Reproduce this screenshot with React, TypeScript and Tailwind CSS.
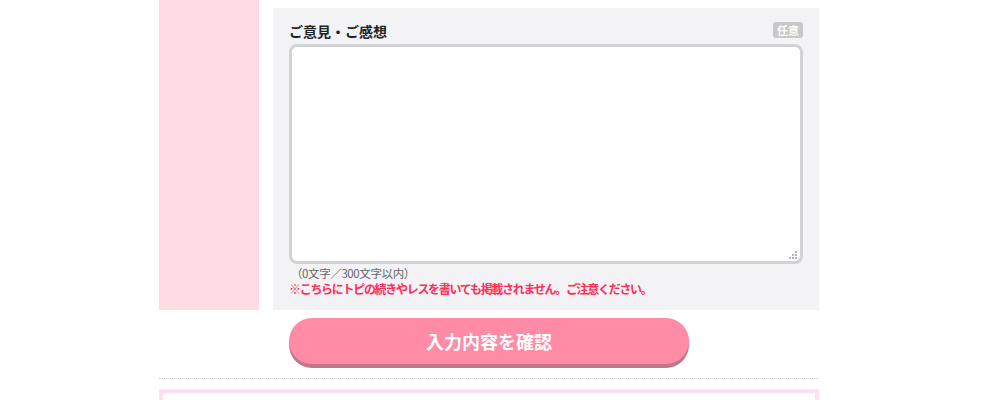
export default function App() {
  return (
    <div
      className="min-h-[400px] bg-white"
      style={{ fontFamily: '"Noto Sans CJK JP", "Noto Sans", sans-serif' }}
    >
      <div className="ml-[159px] w-[660px]">
        {/* form row */}
        <div className="flex gap-[14px]">
          <div className="w-[100px] shrink-0 bg-[#ffdbe3]" />
          <div className="mt-[8px] flex-1 bg-[#f3f3f5] px-[16px] pb-[13px] pt-[16px]">
            <div className="flex h-[20px] items-start justify-between">
              <span className="text-[14px] font-bold leading-[14px] text-[#222]">ご意見・ご感想</span>
              <span className="-mt-[2px] rounded-[3px] bg-[#c8c8c8] px-[4px] py-[2px] text-[11px] font-bold leading-[12px] text-white">
                任意
              </span>
            </div>
            <div className="relative">
              <textarea className="block h-[220px] w-full resize-none rounded-[8px] border-[3px] border-[#d2d2d4] bg-white p-2 text-[13px] outline-none" />
              {/* resize grip */}
              <svg className="absolute bottom-[5px] right-[6px]" width="8" height="8" viewBox="0 0 8 8" fill="#b5b5b5">
                <rect x="6" y="0" width="2" height="2" />
                <rect x="3" y="3" width="2" height="2" />
                <rect x="6" y="3" width="2" height="2" />
                <rect x="0" y="6" width="2" height="2" />
                <rect x="3" y="6" width="2" height="2" />
                <rect x="6" y="6" width="2" height="2" />
              </svg>
            </div>
            <p className="mt-[1px] pl-[2px] text-[11.5px] leading-[16px] tracking-[-0.4px] text-[#666]">（0文字／300文字以内）</p>
            <p className="text-[12px] font-bold leading-[16px] tracking-[-1.3px] text-[#ff2d5a]">
              ※こちらにトピの続きやレスを書いても掲載されません。ご注意ください。
            </p>
          </div>
        </div>

        {/* confirm button */}
        <div className="ml-[130px] pt-[8px]">
          <button className="block h-[46px] w-[400px] rounded-full bg-[#ff8ba6] text-[18px] font-bold text-white shadow-[0_4px_0_#c27788]">
            入力内容を確認
          </button>
        </div>

        <div className="mt-[14px] border-t border-dotted border-[#d0d0d0]" />

        <div className="mt-[10px] h-[40px] border-[4px] border-[#ffdff0]" />
      </div>
    </div>
  );
}
